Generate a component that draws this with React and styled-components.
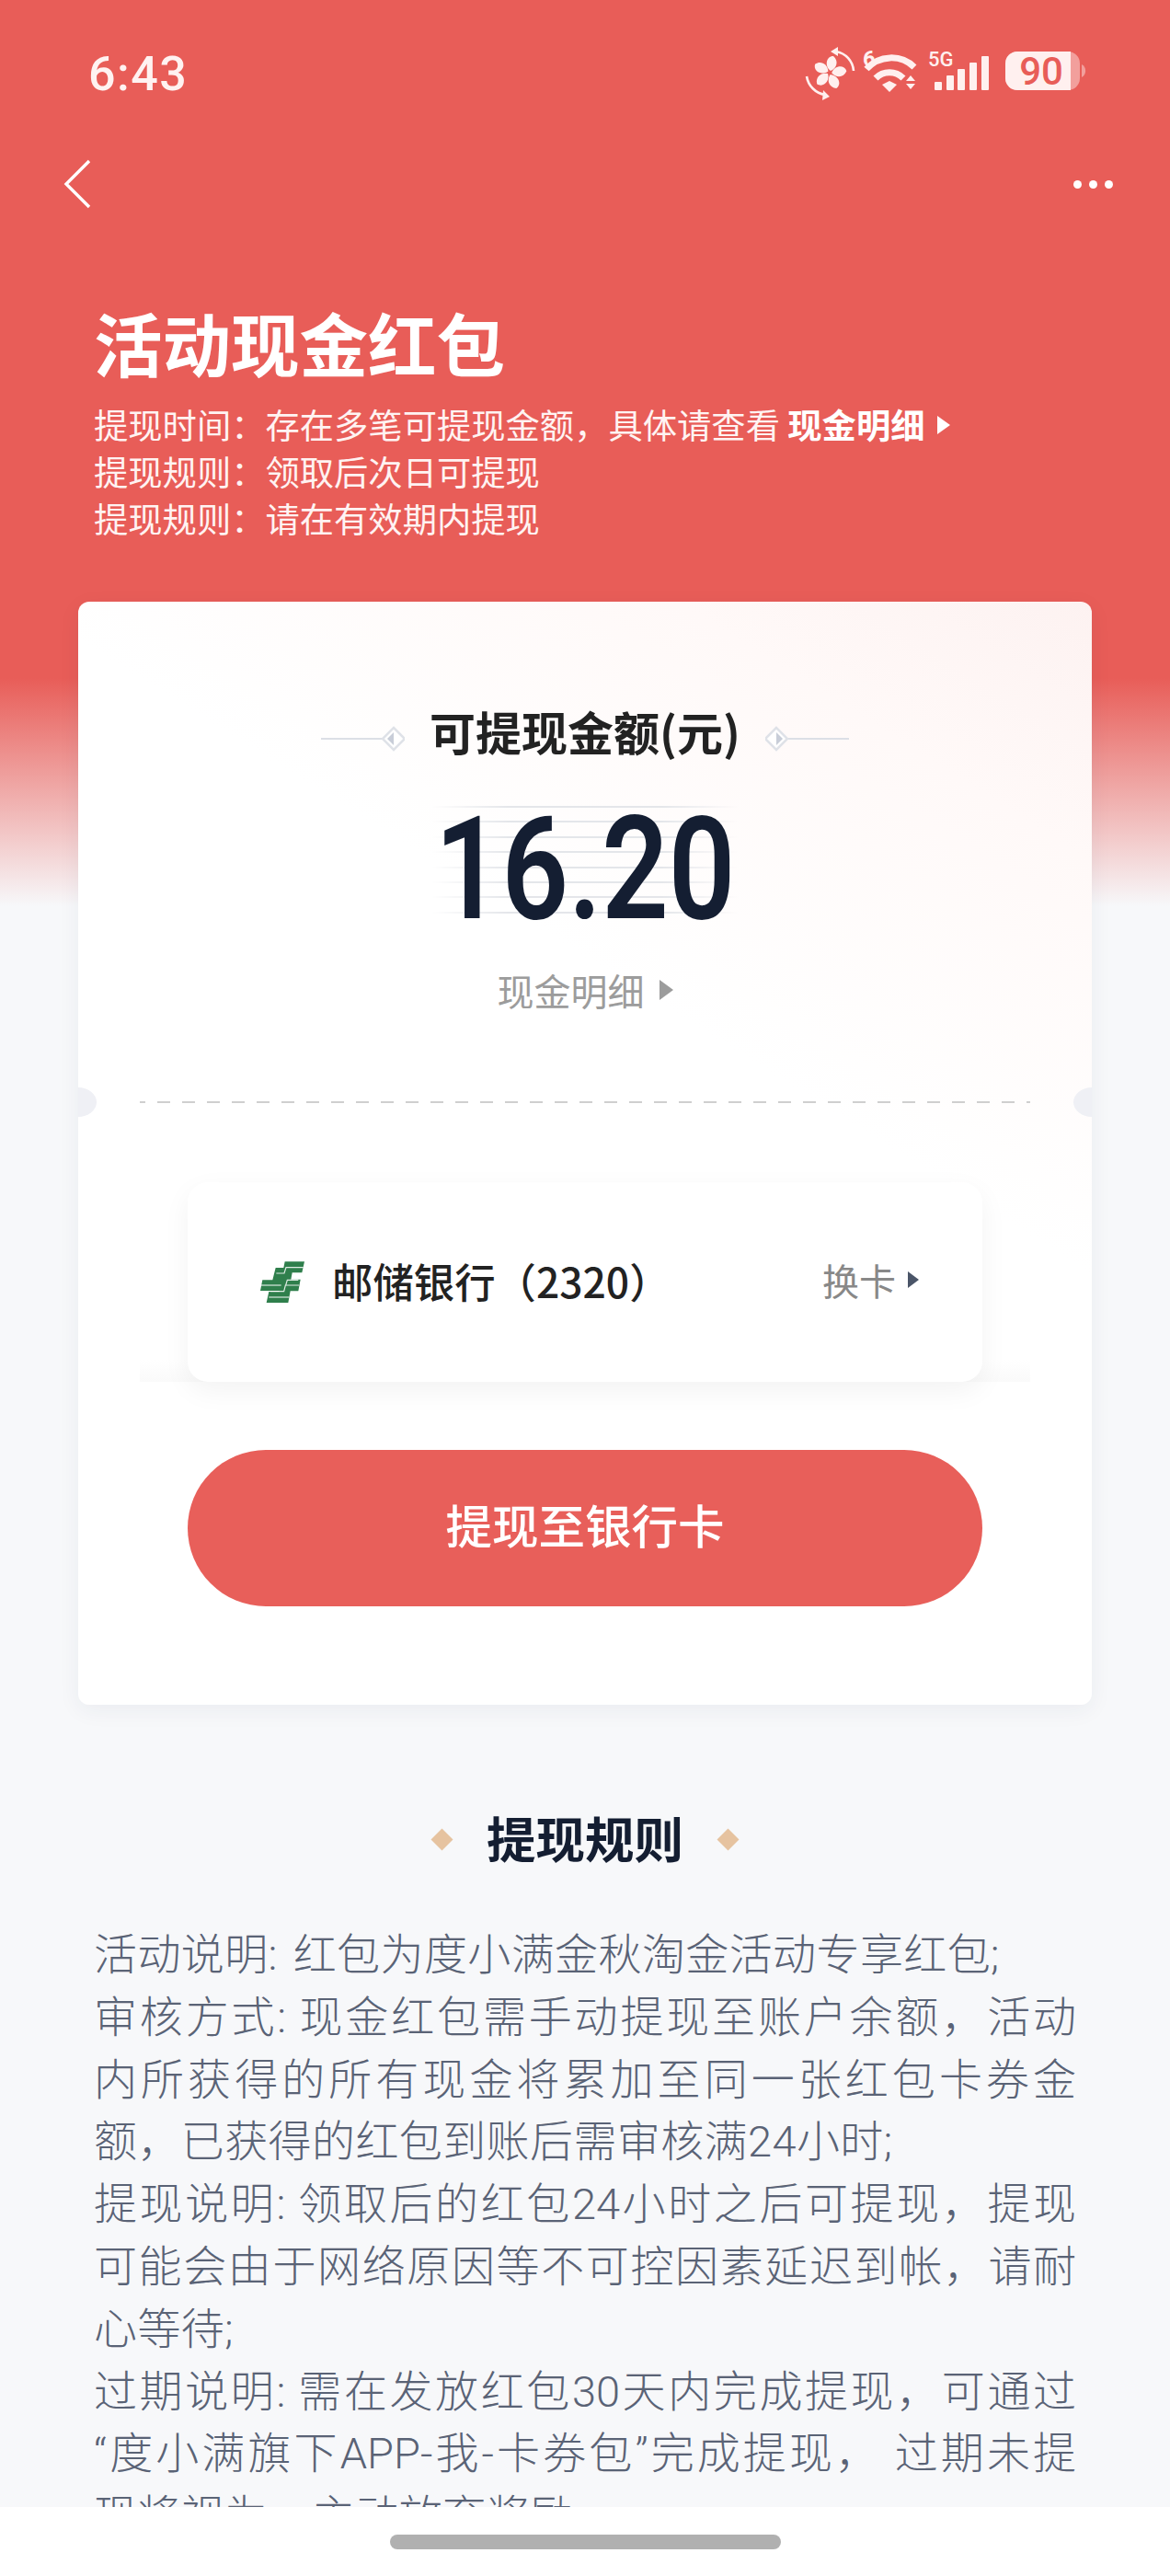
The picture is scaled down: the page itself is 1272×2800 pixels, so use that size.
import React from "react";
import styled, { createGlobalStyle } from "styled-components";

const CJK = `"Noto Sans CJK SC", "Noto Sans", sans-serif`;

const GlobalStyle = createGlobalStyle`
  html, body {
    margin: 0;
    padding: 0;
    background: #f7f8fa;
  }
  body {
    font-family: ${CJK};
  }
`;

const Page = styled.div`
  width: 1272px;
  height: 2800px;
  display: flex;
  flex-direction: column;
  overflow: hidden;
  background: linear-gradient(#e85d58 0, #e85d58 737px, #f7f8fa 985px);
`;

const Scroll = styled.div`
  flex: 1;
  min-height: 0;
  overflow: hidden;
`;

const StatusBar = styled.div`
  height: 160px;
  display: flex;
  justify-content: space-between;
  align-items: center;
  padding: 0 92px 0 96px;
  color: #fff2f1;
`;

const Time = styled.div`
  font-family: Roboto, sans-serif;
  font-size: 52px;
  font-weight: 500;
  letter-spacing: 1.5px;
`;

const NavBar = styled.div`
  height: 80px;
  display: flex;
  justify-content: space-between;
  align-items: center;
  padding: 0 62px 0 68px;
`;

const Dots = styled.div`
  display: flex;
  gap: 8px;
  span {
    width: 9px;
    height: 9px;
    border-radius: 50%;
    background: #fff;
  }
`;

const Header = styled.div`
  margin-top: 87px;
  padding: 0 102px;
  color: #fff;
`;

const Title = styled.h1`
  margin: 0 0 19px;
  font-size: 74.5px;
  line-height: 90px;
  font-weight: 700;
`;

const SubLine = styled.div`
  display: flex;
  align-items: center;
  font-size: 37.3px;
  line-height: 51px;
  color: #fff3f2;
  white-space: pre;
  strong {
    font-weight: 700;
    color: #fff;
  }
`;

const Caret = styled.i`
  display: inline-block;
  width: 0;
  height: 0;
  margin-left: ${(p) => p.$gap || 14}px;
  border-style: solid;
  border-color: transparent transparent transparent ${(p) => p.$color || "#fff"};
  border-width: ${(p) => p.$size / 2}px 0 ${(p) => p.$size / 2}px ${(p) => p.$size * 0.72}px;
`;

const Card = styled.div`
  margin: 65px 85px 0;
  height: 1199px;
  box-sizing: border-box;
  padding-top: 110px;
  overflow: hidden;
  border-radius: 12px;
  background: linear-gradient(212deg, #fdf2f1 0, #fff9f8 240px, #ffffff 620px);
  box-shadow: 0 6px 24px rgba(40, 50, 90, 0.06);
`;

const LabelRow = styled.div`
  display: flex;
  justify-content: center;
  align-items: center;
  gap: 27px;
`;

const Label = styled.div`
  font-size: 50px;
  line-height: 60px;
  font-weight: 700;
  color: #222;
`;

const OrnamentSvg = styled.svg`
  margin-top: 18px;
  transform: ${(p) => (p.$flip ? "scaleX(-1)" : "none")};
`;

const Amount = styled.div`
  position: relative;
  box-sizing: border-box;
  width: 334px;
  height: 131px;
  margin: 52px auto 0;
  padding-top: 6px;
  display: flex;
  justify-content: center;
  align-items: center;
  font-family: Roboto, sans-serif;
  font-weight: 600;
  font-size: 155px;
  color: #141e32;
  &::before {
    content: "";
    position: absolute;
    inset: 0;
    background: repeating-linear-gradient(#e4e6ea 0, #e4e6ea 2px, transparent 2px, transparent 16.4px);
    -webkit-mask-image: linear-gradient(90deg, transparent, #000 25%, #000 75%, transparent);
    mask-image: linear-gradient(90deg, transparent, #000 25%, #000 75%, transparent);
  }
  span {
    position: relative;
    transform: scaleX(0.82);
  }
`;

const DetailLink = styled.div`
  margin-top: 44px;
  display: flex;
  justify-content: center;
  align-items: center;
  font-size: 40px;
  line-height: 50px;
  color: #9c9c9c;
`;

const Divider = styled.div`
  position: relative;
  margin: 96px 67px 0;
  height: 2px;
  background: linear-gradient(90deg, #cfcfcf 0, #cfcfcf 14px, transparent 14px) -8px 0 / 27px 2px repeat-x;
`;

const Notch = styled.i`
  position: absolute;
  top: -15px;
  ${(p) => p.$side}: -87px;
  width: 40px;
  height: 32px;
  border-radius: 50%;
  background: #eff0f5;
`;

const BankWrap = styled.div`
  margin: 86px 67px 0;
  padding: 0 52px;
  background: linear-gradient(transparent calc(100% - 24px), #fafafa 100%);
`;

const BankCard = styled.div`
  height: 217px;
  box-sizing: border-box;
  display: flex;
  align-items: center;
  padding: 0 69px 0 78px;
  border-radius: 22px;
  background: #fff;
  box-shadow: 0 10px 30px rgba(0, 0, 0, 0.05);
`;

const BankName = styled.div`
  margin: 0 0 5px 29px;
  flex: 1;
  font-size: 44.4px;
  font-weight: 500;
  color: #222;
  white-space: pre;
`;

const Swap = styled.div`
  display: flex;
  align-items: center;
  margin-bottom: 5px;
  font-size: 40px;
  color: #888;
`;

const Submit = styled.button`
  display: block;
  width: 864px;
  height: 170px;
  margin: 74px auto 0;
  padding: 0 0 10px;
  border: 0;
  border-radius: 85px;
  background: #e85f5a;
  color: #fff;
  font-family: ${CJK};
  font-size: 50.5px;
  font-weight: 500;
`;

const SectionHead = styled.div`
  margin-top: 109px;
  display: flex;
  justify-content: center;
  align-items: center;
  gap: 40px;
`;

const SectionTitle = styled.h2`
  margin: 0;
  font-size: 53.5px;
  line-height: 70px;
  font-weight: 700;
  color: #141e32;
`;

const Diamond = styled.i`
  width: 17px;
  height: 17px;
  margin-top: 4px;
  transform: rotate(45deg);
  background: #e6c3a0;
`;

const Rules = styled.div`
  margin-top: 59px;
  padding: 0 102px;
`;

const RuleLine = styled.div`
  font-family: Roboto, ${CJK};
  font-size: 47px;
  line-height: 67.8px;
  font-weight: 300;
  color: #5a6376;
  text-align: left;
  text-align-last: ${(p) => (p.$fill ? "justify" : "left")};
  white-space: ${(p) => (p.$fill ? "normal" : "nowrap")};
  word-spacing: ${(p) => (p.$fill ? 0 : 5)}px;
  letter-spacing: ${(p) => (p.$fill ? 0 : 0.4)}px;
`;

const BottomBar = styled.div`
  height: 75px;
  flex: none;
  display: flex;
  justify-content: center;
  padding-top: 30px;
  box-sizing: border-box;
  background: #fff;
  i {
    width: 425px;
    height: 16px;
    border-radius: 8px;
    background: #b0b0b0;
  }
`;

const rules = [
  ["活动说明: 红包为度小满金秋淘金活动专享红包;", false],
  ["审核方式: 现金红包需手动提现至账户余额，活动", true],
  ["内所获得的所有现金将累加至同一张红包卡券金", true],
  ["额，已获得的红包到账后需审核满24小时;", false],
  ["提现说明: 领取后的红包24小时之后可提现，提现", true],
  ["可能会由于网络原因等不可控因素延迟到帐，请耐", true],
  ["心等待;", false],
  ["过期说明: 需在发放红包30天内完成提现，可通过", true],
  ["“度小满旗下APP-我-卡券包”完成提现， 过期未提", true],
  ["现将视为，主动放弃奖励", false],
];

function StatusIcons() {
  const blade = "M1 -2 C-6 -7 -4 -18 4 -18 C10 -13 8 -5 1 -2Z";
  return (
    <svg width="310" height="60" viewBox="0 0 310 60" fill="#fff0ef" style={{ marginRight: -2 }}>
      <g transform="translate(30 29)">
        {[0, 72, 144, 216, 288].map((a) => (
          <path key={a} d={blade} transform={`rotate(${a})`} />
        ))}
      </g>
      <g fill="none" stroke="#fff0ef" strokeWidth="2.6">
        <path d="M37 6 A23 23 0 0 1 56 27" />
        <path d="M5 33 A24 24 0 0 0 25 53" />
      </g>
      <path d="M31 6 L39 1 L39 11Z M30 55 L22 59 L23 48Z" />
      <text x="66" y="22" fontFamily="Roboto, sans-serif" fontSize="24" fontWeight="700">6</text>
      <g fill="none" stroke="#fff0ef" strokeWidth="7">
        <path d="M70 25 A36 36 0 0 1 122 23" />
        <path d="M80 35 A21 21 0 0 1 110 35" />
      </g>
      <path d="M87 42 L95 38 L103 42 L95 50Z" />
      <path d="M118 32 L123 38 H113Z M118 47 L123 41 H113Z" />
      <text x="137" y="22" fontFamily="Roboto, sans-serif" fontSize="22" fontWeight="500">5G</text>
      <rect x="144" y="39" width="8" height="9" rx="1" />
      <rect x="157" y="32" width="8" height="16" rx="1" />
      <rect x="169" y="25" width="8" height="23" rx="1" />
      <rect x="182" y="18" width="8" height="30" rx="1" />
      <rect x="195" y="11" width="8" height="37" rx="1" />
      <rect x="221" y="6" width="81" height="42" rx="13" opacity="0.45" />
      <path d="M234 6 H292 V48 H234 A13 13 0 0 1 221 35 V19 A13 13 0 0 1 234 6Z" />
      <path d="M304 20 A8 8 0 0 1 304 34Z" opacity="0.45" />
      <text x="260" y="42" textAnchor="middle" fill="#e85d58" fontFamily="Roboto, sans-serif" fontSize="42" fontWeight="500">90</text>
    </svg>
  );
}

function Ornament({ flip }) {
  return (
    <OrnamentSvg width="91" height="30" viewBox="0 0 91 30" $flip={flip}>
      <path d="M0 15 H68" stroke="#dcdfe6" strokeWidth="2" />
      <path d="M79 3 L91 15 L79 27 L67 15Z" fill="#fff" stroke="#dfe2e8" strokeWidth="2.5" />
      <path d="M79 8 L72 15 L79 22Z" fill="#c8cdd8" />
    </OrnamentSvg>
  );
}

function PostalLogo() {
  return (
    <svg width="50" height="46" viewBox="125 87 150 138" style={{ flex: "none" }}>
      <path
        fill="#2f7f4c"
        d="M208 88 H272 L264 124 H232 L228 146 H259 L252 184 H226 L219 222 H148 L156 186 H188 L192 183 H128 L135 148 H168 L178 108 H204Z"
      />
      <g fill="none" stroke="#fff" strokeWidth="3.5" opacity="0.85">
        <path d="M268 107 H212 L206 126 H180" />
        <path d="M254 165 H210 L205 185 H160" />
        <path d="M130 165 H196" />
        <path d="M252 148 H216 L211 165" />
        <path d="M222 204 H156" />
      </g>
    </svg>
  );
}

export default function App() {
  return (
    <Page>
      <GlobalStyle />
      <Scroll>
        <StatusBar>
          <Time>6:43</Time>
          <StatusIcons />
        </StatusBar>
        <NavBar>
          <svg width="32" height="54" viewBox="0 0 32 54" fill="none" stroke="#fff" strokeWidth="3.4">
            <path d="M29 2 L4 27 L29 52" />
          </svg>
          <Dots>
            <span />
            <span />
            <span />
          </Dots>
        </NavBar>
        <Header>
          <Title>活动现金红包</Title>
          <SubLine>
            提现时间：存在多笔可提现金额，具体请查看 <strong>现金明细</strong>
            <Caret $size={20} />
          </SubLine>
          <SubLine>提现规则：领取后次日可提现</SubLine>
          <SubLine>提现规则：请在有效期内提现</SubLine>
        </Header>
        <Card>
          <LabelRow>
            <Ornament />
            <Label>可提现金额(元)</Label>
            <Ornament flip />
          </LabelRow>
          <Amount>
            <span>16.20</span>
          </Amount>
          <DetailLink>
            现金明细
            <Caret $size={22} $color="#9c9c9c" $gap={16} />
          </DetailLink>
          <Divider>
            <Notch $side="left" />
            <Notch $side="right" />
          </Divider>
          <BankWrap>
            <BankCard>
              <PostalLogo />
              <BankName>邮储银行（2320）</BankName>
              <Swap>
                换卡
                <Caret $size={18} $color="#4a5568" $gap={13} />
              </Swap>
            </BankCard>
          </BankWrap>
          <Submit>提现至银行卡</Submit>
        </Card>
        <SectionHead>
          <Diamond />
          <SectionTitle>提现规则</SectionTitle>
          <Diamond />
        </SectionHead>
        <Rules>
          {rules.map(([text, fill]) => (
            <RuleLine key={text} $fill={fill}>
              {text}
            </RuleLine>
          ))}
        </Rules>
      </Scroll>
      <BottomBar>
        <i />
      </BottomBar>
    </Page>
  );
}
